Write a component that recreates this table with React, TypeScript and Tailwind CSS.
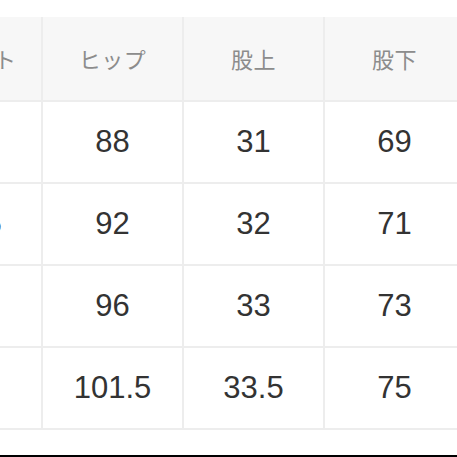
const headers = ["ウエスト", "ヒップ", "股上", "股下"];

const rows = [
  ["68", "88", "31", "69"],
  ["72.5", "92", "32", "71"],
  ["76", "96", "33", "73"],
  ["80", "101.5", "33.5", "75"],
];

export default function App() {
  return (
    <div
      className="w-[457px] h-[457px] overflow-hidden bg-white flex flex-col"
      style={{ fontFamily: '"Noto Sans CJK JP", "Noto Sans", sans-serif' }}
    >
      <div className="mt-[17px] ml-[-98px] w-[560px] bg-[#ededed] pb-[2px]">
        <div className="grid grid-cols-[139px_139px_139px_139px] gap-[2px]">
          {headers.map((h) => (
            <div
              key={h}
              className="h-[83px] bg-[#f7f7f7] flex items-center justify-center text-[22px] text-[#8c8c8c] tracking-wide"
            >
              {h}
            </div>
          ))}
          {rows.map((r, i) =>
            r.map((v, j) => (
              <div
                key={`${i}-${j}`}
                className="h-[80px] bg-white flex items-center justify-center text-[31px] text-[#333333] font-['Liberation_Sans',Arial,sans-serif]"
              >
                {v}
              </div>
            ))
          )}
        </div>
      </div>
      <div className="mt-auto h-[2px] bg-black" />
    </div>
  );
}
